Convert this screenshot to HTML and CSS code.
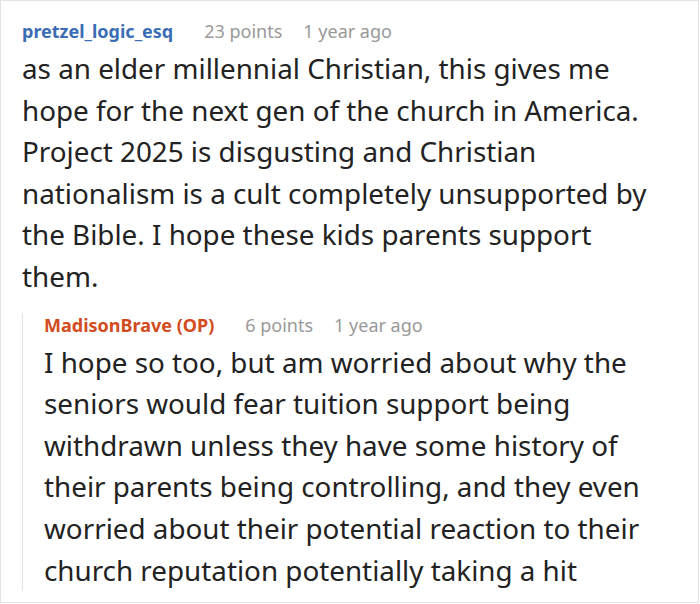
FILE: index.html
```html
<!DOCTYPE html>
<html>
<head>
<meta charset="utf-8">
<link rel="stylesheet" href="styles.css">
</head>
<body>
<div class="frame">
  <div class="comment">
    <div class="meta">
      <span class="user">pretzel_logic_esq</span>
      <span class="points">23 points</span>
      <span class="time">1 year ago</span>
    </div>
    <p class="body">as an elder millennial Christian, this gives me hope for the next gen of the church in America. Project 2025 is disgusting and Christian nationalism is a cult completely unsupported by the Bible. I hope these kids parents support them.</p>
    <div class="reply">
      <div class="meta">
        <span class="user op">MadisonBrave (OP)</span>
        <span class="points">6 points</span>
        <span class="time">1 year ago</span>
      </div>
      <p class="body">I hope so too, but am worried about why the seniors would fear tuition support being withdrawn unless they have some history of their parents being controlling, and they even worried about their potential reaction to their church reputation potentially taking a hit</p>
    </div>
  </div>
</div>
</body>
</html>
```
FILE: styles.css
```css
html, body {
  margin: 0;
  padding: 0;
  background: #fff;
}
body {
  font-family: "Noto Sans", "Open Sans", sans-serif;
  color: #222;
}
.frame {
  width: 699px;
  height: 603px;
  box-sizing: border-box;
  border: 1px solid #e3e3e3;
  overflow: hidden;
}
.comment {
  padding: 18px 38px 0 21px;
}
.meta {
  display: flex;
  align-items: baseline;
  font-size: 18px;
  line-height: 24px;
}
.user {
  font-weight: 700;
  color: #3a6db5;
  margin-right: 31px;
}
.user.op {
  color: #d24c1e;
}
.points, .time {
  color: #999;
}
.points {
  margin-right: 21px;
}
.body {
  margin: 0;
  font-size: 27.8px;
  line-height: 41.6px;
  color: #222;
}
.body:first-of-type {
  margin-top: 5px;
}
.reply {
  margin-top: 15px;
  padding-left: 21px;
  border-left: 1px solid #e3e3e3;
}
.reply .body {
  margin-top: 5px;
}
```
